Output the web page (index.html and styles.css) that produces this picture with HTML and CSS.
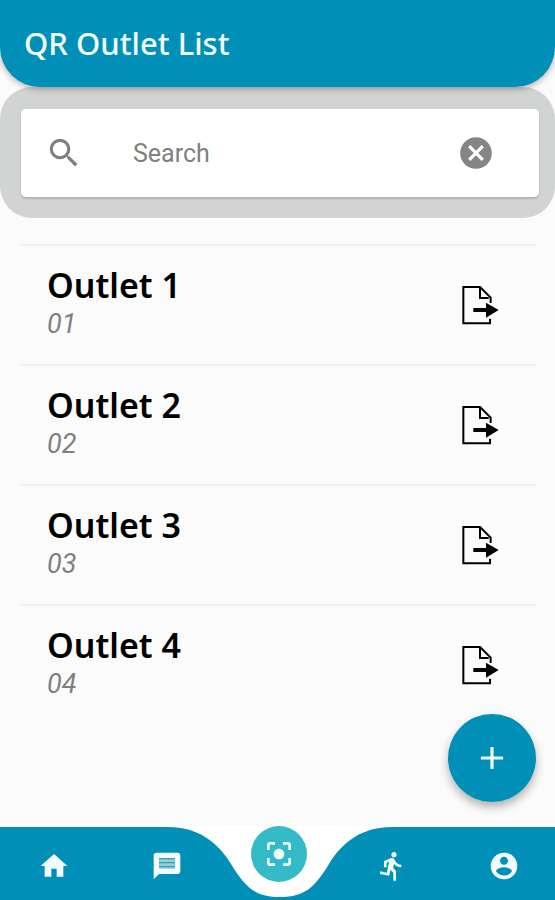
FILE: index.html
```html
<!DOCTYPE html>
<html lang="en">
<head>
    <meta charset="UTF-8">
    <meta name="viewport" content="width=device-width, initial-scale=1.0">
    <title>QR Outlet List</title>
    <link rel="stylesheet" href="styles.css">
</head>
<body>
    <!-- Shared icon for the outlet rows -->
    <svg class="icon-defs" aria-hidden="true">
        <symbol id="icon-export" viewBox="22 18 114 120">
            <path d="M106 119v14H26V24h50l32 32v16" fill="none" stroke="#000" stroke-width="6"/>
            <path d="M76 24v33h26" fill="none" stroke="#000" stroke-width="6"/>
            <path d="M56 87h38V71l38 22-38 23V99H56z" fill="#000"/>
        </symbol>
    </svg>

    <div class="app">
        <header class="header">
            <h1>QR Outlet List</h1>
        </header>

        <main class="content">
            <form class="search">
                <div class="search-box">
                    <svg class="search-icon" viewBox="0 0 24 24" aria-hidden="true">
                        <path d="M15.5 14h-.79l-.28-.27A6.47 6.47 0 0 0 16 9.5 6.5 6.5 0 1 0 9.5 16c1.61 0 3.09-.59 4.23-1.57l.27.28v.79l5 4.99L20.49 19l-4.99-5zm-6 0C7.01 14 5 11.99 5 9.5S7.01 5 9.5 5 14 7.01 14 9.5 11.99 14 9.5 14z"/>
                    </svg>
                    <input type="text" class="search-input" placeholder="Search" aria-label="Search">
                    <button type="reset" class="clear-btn" aria-label="Clear search">
                        <svg viewBox="0 0 24 24" aria-hidden="true">
                            <path d="M12 2C6.47 2 2 6.47 2 12s4.47 10 10 10 10-4.47 10-10S17.53 2 12 2zm5 13.59L15.59 17 12 13.41 8.41 17 7 15.59 10.59 12 7 8.41 8.41 7 12 10.59 15.59 7 17 8.41 13.41 12 17 15.59z"/>
                        </svg>
                    </button>
                </div>
            </form>

            <ul class="outlets">
                <li class="outlet">
                    <div>
                        <h2>Outlet 1</h2>
                        <p>01</p>
                    </div>
                    <button type="button" class="export-btn" aria-label="Export Outlet 1"><svg><use href="#icon-export"/></svg></button>
                </li>
                <li class="outlet">
                    <div>
                        <h2>Outlet 2</h2>
                        <p>02</p>
                    </div>
                    <button type="button" class="export-btn" aria-label="Export Outlet 2"><svg><use href="#icon-export"/></svg></button>
                </li>
                <li class="outlet">
                    <div>
                        <h2>Outlet 3</h2>
                        <p>03</p>
                    </div>
                    <button type="button" class="export-btn" aria-label="Export Outlet 3"><svg><use href="#icon-export"/></svg></button>
                </li>
                <li class="outlet">
                    <div>
                        <h2>Outlet 4</h2>
                        <p>04</p>
                    </div>
                    <button type="button" class="export-btn" aria-label="Export Outlet 4"><svg><use href="#icon-export"/></svg></button>
                </li>
            </ul>
        </main>

        <button type="button" class="add-btn" aria-label="Add outlet">
            <svg viewBox="0 0 24 24" aria-hidden="true"><path d="M19 13h-6v6h-2v-6H5v-2h6V5h2v6h6v2z"/></svg>
        </button>

        <nav class="navbar">
            <!-- Curved bar behind the icons -->
            <div class="navbar-bg">
                <span></span>
                <svg viewBox="0 0 241 73" aria-hidden="true">
                    <path d="M0 0H11C40 0 60 14 74 37C88 60 98 70 123 70C148 70 158 60 172 37C186 14 206 0 235 0H241V73H0z"/>
                </svg>
                <span></span>
            </div>
            <a href="#home" class="nav-item" aria-label="Home">
                <svg viewBox="0 0 24 24"><path d="M10 20v-6h4v6h5v-8h3L12 3 2 12h3v8z"/></svg>
            </a>
            <a href="#messages" class="nav-item" aria-label="Messages">
                <svg viewBox="0 0 24 24">
                    <path class="shade" d="M5 5h14v10H5z"/>
                    <path d="M20 2H4c-1.1 0-2 .9-2 2v18l4-4h14c1.1 0 2-.9 2-2V4c0-1.1-.9-2-2-2zM6 6h12v8H6z" fill-rule="evenodd"/>
                    <path class="lines" d="M6 6h12v1H6zm0 3h12v1H6zm0 3h12v1H6z"/>
                </svg>
            </a>
            <a href="#scan" class="nav-item nav-scan" aria-label="Scan">
                <svg viewBox="0 0 24 24"><path d="M5 15H3v4c0 1.1.9 2 2 2h4v-2H5v-4zM5 5h4V3H5c-1.1 0-2 .9-2 2v4h2V5zm14-2h-4v2h4v4h2V5c0-1.1-.9-2-2-2zm0 16h-4v2h4c1.1 0 2-.9 2-2v-4h-2v4zM12 8c-2.21 0-4 1.79-4 4s1.79 4 4 4 4-1.79 4-4-1.79-4-4-4z"/></svg>
            </a>
            <a href="#activity" class="nav-item" aria-label="Activity">
                <svg viewBox="0 0 24 24"><path d="M13.49 5.48c1.1 0 2-.9 2-2s-.9-2-2-2-2 .9-2 2 .9 2 2 2zm-3.6 13.9 1-4.4 2.1 2v6h2v-7.5l-2.1-2 .6-3c1.3 1.5 3.3 2.5 5.5 2.5v-2c-1.9 0-3.5-1-4.3-2.4l-1-1.6c-.4-.6-1-1-1.7-1-.3 0-.5.1-.8.1l-5.2 2.2v4.7h2v-3.4l1.8-.7-1.6 8.1-4.9-1-.4 2 7 1.4z"/></svg>
            </a>
            <a href="#account" class="nav-item" aria-label="Account">
                <svg viewBox="0 0 24 24"><path d="M12 2C6.48 2 2 6.48 2 12s4.48 10 10 10 10-4.48 10-10S17.52 2 12 2zm0 3c1.66 0 3 1.34 3 3s-1.34 3-3 3-3-1.34-3-3 1.34-3 3-3zm0 14.2c-2.5 0-4.71-1.28-6-3.22.03-1.99 4-3.08 6-3.08 1.99 0 5.97 1.09 6 3.08-1.29 1.94-3.5 3.22-6 3.22z"/></svg>
            </a>
        </nav>
    </div>
</body>
</html>
```

FILE: styles.css
```css
* {
    box-sizing: border-box;
}

body {
    margin: 0;
    background: #fbfbfb;
    font-family: Roboto, "Liberation Sans", sans-serif;
}

h1, h2, p, ul {
    margin: 0;
    padding: 0;
}

button {
    padding: 0;
    border: none;
    background: none;
    cursor: pointer;
}

svg {
    display: block;
}

.icon-defs {
    display: none;
}

.app {
    position: relative;
    display: flex;
    flex-direction: column;
    height: 100vh;
}

/* Header */
.header {
    z-index: 1;
    padding: 22px 24px 23px;
    background: #0090b7;
    border-radius: 0 0 40px 40px;
    box-shadow: 0 2px 6px rgba(0, 0, 0, 0.3);
}

.header h1 {
    color: #f2fcff;
    font-family: "Noto Sans", sans-serif;
    font-size: 31px;
    font-weight: 500;
    line-height: 42px;
}

.content {
    flex: 1;
    min-height: 0;
    overflow-y: auto;
}

/* Search */
.search {
    padding: 22px 16px 21px 21px;
    background: #d2d3d3;
    border-radius: 32px;
}

.search-box {
    display: flex;
    align-items: center;
    height: 88px;
    padding: 0 44px 0 24px;
    background: #fff;
    border-radius: 5px;
    box-shadow: 0 2px 2px rgba(0, 0, 0, 0.15);
}

.search-icon {
    flex: none;
    width: 38px;
    height: 38px;
    fill: #808080;
}

.search-input {
    flex: 1;
    min-width: 0;
    margin-left: 50px;
    padding: 0;
    border: none;
    outline: none;
    background: none;
    color: #333;
    font-family: inherit;
    font-size: 25px;
}

.search-input::placeholder {
    color: #808080;
}

.clear-btn svg {
    width: 38px;
    height: 38px;
    fill: #858585;
}

/* Outlet list */
.outlets {
    margin: 26px 19px 0 21px;
    list-style: none;
}

.outlet {
    display: flex;
    align-items: center;
    justify-content: space-between;
    padding: 20px 36px 20px 26px;
    border-top: 2px solid #f0f0f0;
}

.outlet h2 {
    color: #000;
    font-family: "Noto Sans", sans-serif;
    font-size: 34px;
    font-weight: 600;
    line-height: 38px;
}

.outlet p {
    color: #808080;
    font-size: 27px;
    font-style: italic;
    font-weight: 400;
    line-height: 40px;
}

.export-btn svg {
    width: 38px;
    height: 40px;
}

/* Floating add button */
.add-btn {
    position: absolute;
    right: 19px;
    bottom: 98px;
    display: flex;
    align-items: center;
    justify-content: center;
    width: 88px;
    height: 88px;
    border-radius: 50%;
    background: #0090b7;
    box-shadow: 0 5px 10px rgba(0, 0, 0, 0.3);
}

.add-btn svg {
    width: 38px;
    height: 38px;
    fill: #f2fcff;
}

/* Bottom navigation */
.navbar {
    position: relative;
    display: flex;
    align-items: flex-end;
    justify-content: space-between;
    height: 74px;
    padding: 0 23px 18px 26px;
    background: #fff;
}

.navbar-bg {
    position: absolute;
    top: 1px;
    right: 0;
    bottom: 0;
    left: 0;
    display: flex;
}

.navbar-bg span {
    flex: 1;
    background: #0090b7;
}

.navbar-bg svg {
    width: 241px;
    height: 73px;
    fill: #0090b7;
}

.nav-item {
    position: relative;
    display: flex;
    align-items: center;
    justify-content: center;
    width: 56px;
    height: 32px;
}

.nav-item svg {
    width: 32px;
    height: 32px;
    fill: #f2fcff;
}

.nav-item .shade {
    fill: #8ed0dc;
}

.nav-item .lines {
    fill: #3a9db4;
}

.nav-scan {
    height: 56px;
    border-radius: 50%;
    background: #35bbc8;
}
```
